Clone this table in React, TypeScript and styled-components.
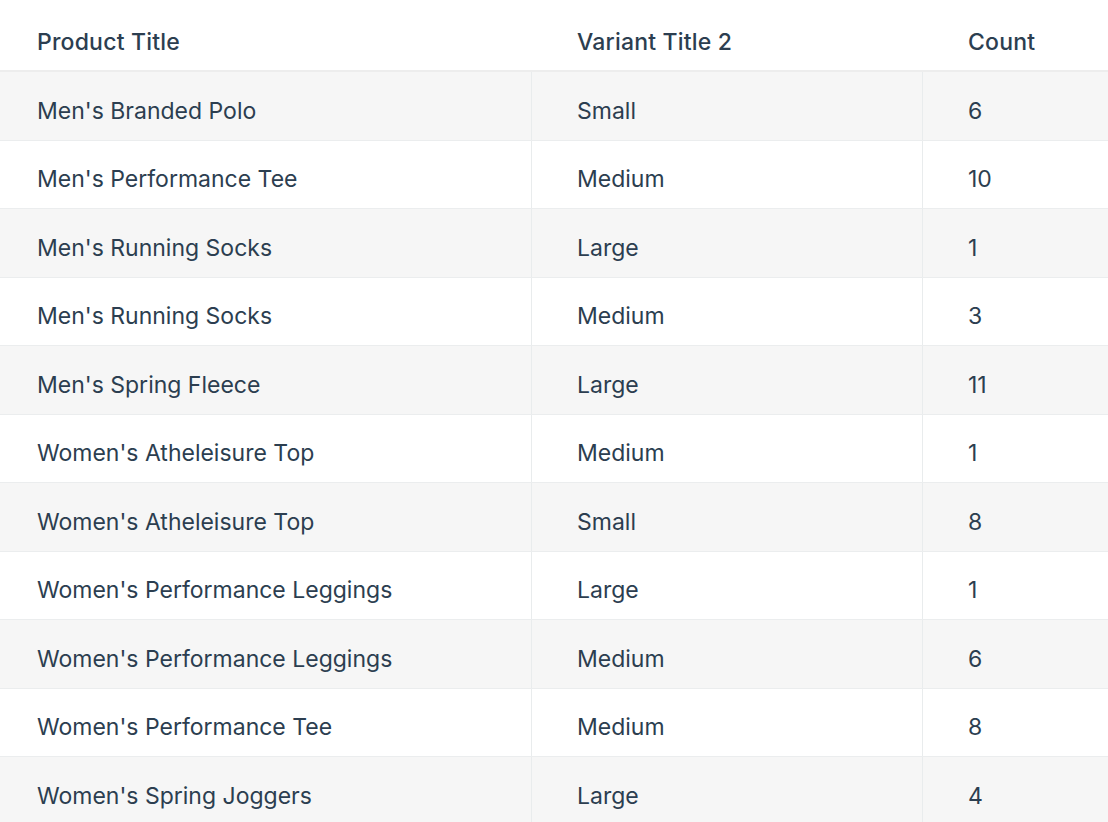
import React from "react";
import styled, { createGlobalStyle } from "styled-components";

const GlobalStyle = createGlobalStyle`
  html, body {
    margin: 0;
    padding: 0;
    background: #ffffff;
  }
  body {
    font-family: Inter, "Noto Sans", "Liberation Sans", sans-serif;
    color: #2c3e50;
    -webkit-font-smoothing: antialiased;
  }
`;

const Table = styled.div`
  width: 1108px;
  overflow: hidden;
  background: #ffffff;
`;

const columns = "531px 391px 1fr";

const HeaderRow = styled.div`
  display: grid;
  grid-template-columns: ${columns};
  height: 72px;
  box-sizing: border-box;
  border-bottom: 2px solid #ededed;
`;

const HeaderCell = styled.div<{ $first?: boolean }>`
  display: flex;
  align-items: center;
  padding: 14px 0 0 ${(p) => (p.$first ? "37px" : "46px")};
  font-size: 23px;
  font-weight: 500;
  letter-spacing: 0.2px;
  color: #2c3e50;
  white-space: nowrap;
`;

const Row = styled.div<{ $striped: boolean }>`
  display: grid;
  grid-template-columns: ${columns};
  height: 68.5px;
  box-sizing: border-box;
  background: ${(p) => (p.$striped ? "#f6f6f6" : "#ffffff")};
  border-bottom: 1px solid #ebedee;
`;

const Cell = styled.div<{ $first?: boolean }>`
  display: flex;
  align-items: center;
  padding: 10px 0 0 ${(p) => (p.$first ? "37px" : "45px")};
  border-left: ${(p) => (p.$first ? "none" : "1px solid #e9eced")};
  font-size: 23px;
  font-weight: 400;
  color: #2c3e50;
  white-space: nowrap;
`;

const data: [string, string, number][] = [
  ["Men's Branded Polo", "Small", 6],
  ["Men's Performance Tee", "Medium", 10],
  ["Men's Running Socks", "Large", 1],
  ["Men's Running Socks", "Medium", 3],
  ["Men's Spring Fleece", "Large", 11],
  ["Women's Atheleisure Top", "Medium", 1],
  ["Women's Atheleisure Top", "Small", 8],
  ["Women's Performance Leggings", "Large", 1],
  ["Women's Performance Leggings", "Medium", 6],
  ["Women's Performance Tee", "Medium", 8],
  ["Women's Spring Joggers", "Large", 4],
];

export default function App() {
  return (
    <>
      <GlobalStyle />
      <Table>
        <HeaderRow>
          <HeaderCell $first>Product Title</HeaderCell>
          <HeaderCell>Variant Title 2</HeaderCell>
          <HeaderCell>Count</HeaderCell>
        </HeaderRow>
        {data.map(([product, variant, count], i) => (
          <Row key={i} $striped={i % 2 === 0}>
            <Cell $first>{product}</Cell>
            <Cell>{variant}</Cell>
            <Cell>{count}</Cell>
          </Row>
        ))}
      </Table>
    </>
  );
}
